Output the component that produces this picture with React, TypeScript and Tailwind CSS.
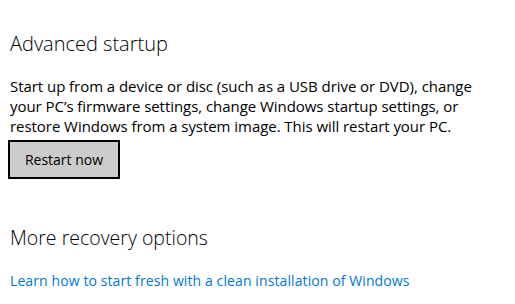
export default function App() {
  return (
    <div className="w-[515px] h-[304px] overflow-hidden bg-white text-black font-['Open_Sans',sans-serif]">
      <div className="pl-[10px] pt-[30px]">
        <h2 className="text-[20px] leading-[28px] font-light">Advanced startup</h2>
        <p className="mt-[18px] text-[15px] leading-[20px] tracking-[-0.05px] whitespace-nowrap">
          Start up from a device or disc (such as a USB drive or DVD), change
          <br />
          your PC’s firmware settings, change Windows startup settings, or
          <br />
          restore Windows from a system image. This will restart your PC.
        </p>
        <button className="-ml-[2px] mt-[4px] w-[112px] h-[39px] border-2 border-black bg-[#cccccc] text-[14px]">
          Restart now
        </button>
        <h2 className="mt-[45px] text-[19.5px] leading-[28px] font-light">More recovery options</h2>
        <a className="block mt-[19px] text-[14px] leading-[20px] tracking-[0.1px] text-[#0078d7]">
          Learn how to start fresh with a clean installation of Windows
        </a>
      </div>
    </div>
  )
}
